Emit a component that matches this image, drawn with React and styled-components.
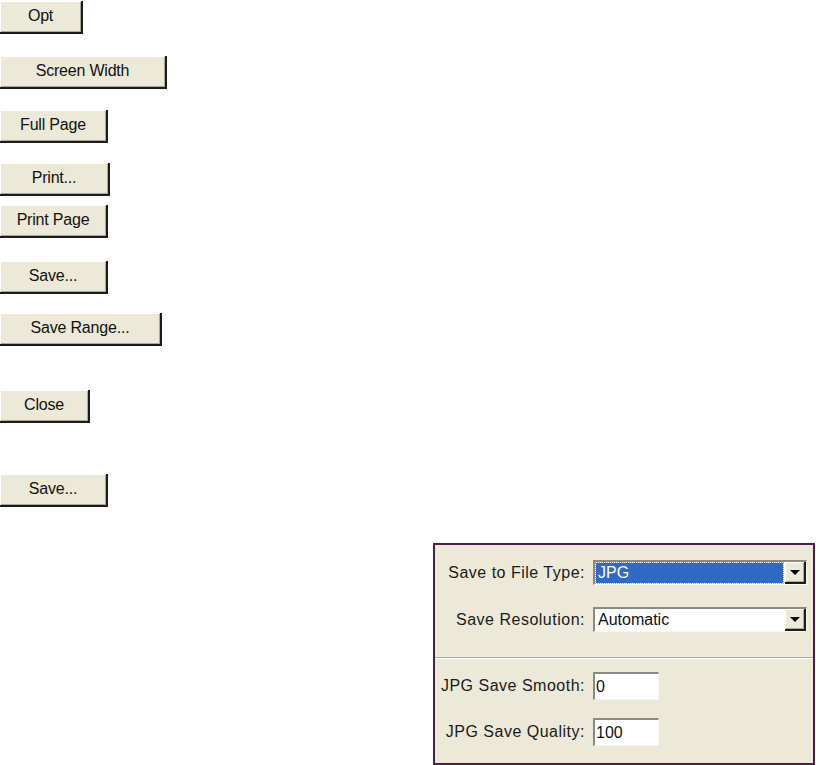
import React from 'react'
import styled, { createGlobalStyle } from 'styled-components';

const Global = createGlobalStyle`
  html, body {
    margin: 0;
    padding: 0;
    background: #ffffff;
  }
  body {
    width: 816px;
    height: 765px;
    overflow: hidden;
    font-family: "Liberation Sans", Arial, sans-serif;
  }
`;

const Page = styled.div`
  display: flex;
  flex-direction: column;
  align-items: flex-start;
`;

const Button = styled.button`
  box-sizing: border-box;
  margin-top: ${props => props.top}px;
  width: ${props => props.w}px;
  height: 33px;
  padding: 0 0 2px;
  background: #ece9d8;
  border: none;
  border-right: 2px solid #1c1c1c;
  border-bottom: 2px solid #1c1c1c;
  box-shadow: inset 1px 1px 0 #ffffff, inset -1px -1px 0 #aca899;
  font-family: "Liberation Sans", Arial, sans-serif;
  font-size: 16px;
  color: #111;
  letter-spacing: -0.2px;
`;

const Panel = styled.div`
  box-sizing: border-box;
  margin-top: 36px;
  margin-left: 433px;
  width: 382px;
  height: 222px;
  background: #ece9d8;
  border: 2px solid #4a1f4a;
  display: flex;
  flex-direction: column;
`;

const Section = styled.div`
  display: grid;
  grid-template-columns: 150px auto;
  column-gap: 8px;
  row-gap: ${props => props.gap}px;
  align-items: center;
  padding: ${props => props.pad};
  border-bottom: ${props => props.divided ? '1px solid #aca899' : 'none'};
  box-shadow: ${props => props.divided ? '0 1px 0 #ffffff' : 'none'};
`;

const Label = styled.label`
  text-align: right;
  font-size: 16px;
  color: #1a1a1a;
  letter-spacing: 0.5px;
  white-space: nowrap;
`;

const Select = styled.div`
  box-sizing: border-box;
  width: 214px;
  height: 25px;
  display: flex;
  background: #ffffff;
  border-top: 2px solid #8c8a80;
  border-left: 2px solid #8c8a80;
  border-right: 1px solid #f8f8f4;
  border-bottom: 1px solid #f8f8f4;
`;

const SelectValue = styled.div`
  flex: 1;
  margin: 1px 2px 1px 1px;
  padding-left: 2px;
  display: flex;
  align-items: center;
  font-size: 16px;
  color: ${props => props.selected ? '#ffffff' : '#111'};
  background: ${props => props.selected ? '#316ac5' : 'transparent'};
  outline: ${props => props.selected ? '1px dotted #c8a040' : 'none'};
`;

const Arrow = styled.div`
  box-sizing: border-box;
  width: 21px;
  background: #ece9d8;
  display: flex;
  align-items: center;
  justify-content: center;
  border-right: 2px solid #1c1c1c;
  border-bottom: 2px solid #1c1c1c;
  box-shadow: inset 1px 1px 0 #ffffff, inset -1px -1px 0 #aca899;
  &::after {
    content: '';
    border-left: 5px solid transparent;
    border-right: 5px solid transparent;
    border-top: 5px solid #000;
    margin-top: 1px;
  }
`;

const Field = styled.div`
  box-sizing: border-box;
  width: 66px;
  height: 28px;
  background: #ffffff;
  border-top: 2px solid #8c8a80;
  border-left: 2px solid #8c8a80;
  border-right: 1px solid #f4f3ee;
  border-bottom: 1px solid #f4f3ee;
  padding-left: 1px;
  display: flex;
  align-items: center;
  font-size: 16px;
  color: #111;
`;

const buttons = [
  { label: 'Opt', top: 1, w: 83 },
  { label: 'Screen Width', top: 22, w: 167 },
  { label: 'Full Page', top: 21, w: 108 },
  { label: 'Print...', top: 20, w: 110 },
  { label: 'Print Page', top: 9, w: 108 },
  { label: 'Save...', top: 23, w: 108 },
  { label: 'Save Range...', top: 19, w: 162 },
  { label: 'Close', top: 44, w: 90 },
  { label: 'Save...', top: 51, w: 108 },
];

export default function App() {
  return (
    <>
      <Global />
      <Page>
        {buttons.map((b, i) => (
          <Button key={i} top={b.top} w={b.w}>{b.label}</Button>
        ))}
        <Panel>
          <Section gap={22} pad="15px 0 25px 0" divided>
            <Label>Save to File Type:</Label>
            <Select>
              <SelectValue selected>JPG</SelectValue>
              <Arrow />
            </Select>
            <Label>Save Resolution:</Label>
            <Select>
              <SelectValue>Automatic</SelectValue>
              <Arrow />
            </Select>
          </Section>
          <Section gap={18} pad="14px 0 0 0">
            <Label>JPG Save Smooth:</Label>
            <Field>0</Field>
            <Label>JPG Save Quality:</Label>
            <Field>100</Field>
          </Section>
        </Panel>
      </Page>
    </>
  )
}
